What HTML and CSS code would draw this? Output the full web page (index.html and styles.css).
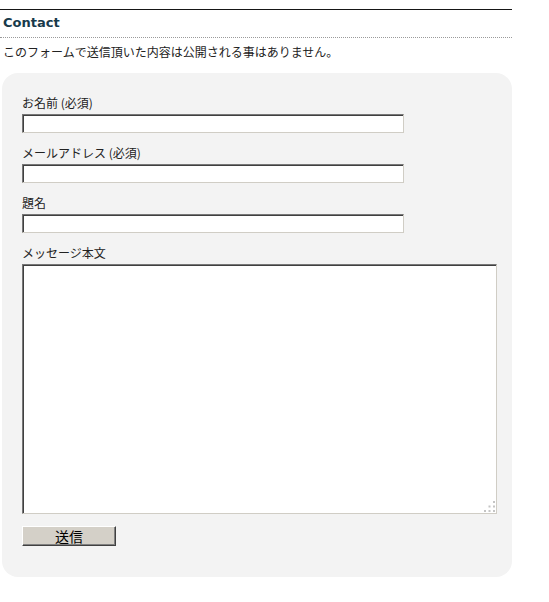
FILE: index.html
```html
<!DOCTYPE html>
<html lang="ja">
<head>
<meta charset="utf-8">
<title>Contact</title>
<link rel="stylesheet" href="styles.css">
</head>
<body>
<div class="page">
  <h2 class="title">Contact</h2>
  <p class="note">このフォームで送信頂いた内容は公開される事はありません。</p>
  <form class="box">
    <div class="field">
      <label class="label" for="n">お名前 (必須)</label>
      <input class="text" id="n" type="text">
    </div>
    <div class="field">
      <label class="label" for="m">メールアドレス (必須)</label>
      <input class="text" id="m" type="text">
    </div>
    <div class="field">
      <label class="label" for="s">題名</label>
      <input class="text" id="s" type="text">
    </div>
    <div class="field">
      <label class="label" for="b">メッセージ本文</label>
      <textarea class="area" id="b"></textarea>
    </div>
    <div class="actions">
      <button class="submit" type="button">送信</button>
    </div>
  </form>
</div>
</body>
</html>
```
FILE: styles.css
```css
html, body {
  margin: 0;
  padding: 0;
  background: #ffffff;
}
body {
  font-family: "Noto Sans CJK JP", "DejaVu Sans", sans-serif;
  font-size: 12px;
  color: #222;
}
.page {
  width: 512px;
  padding-top: 9px;
}
.title {
  margin: 0;
  border-top: 1px solid #161616;
  border-bottom: 1px dotted #9a9a9a;
  padding: 4px 0 0 3px;
  height: 23px;
  box-sizing: content-box;
  font-family: "DejaVu Sans", Verdana, sans-serif;
  font-size: 13px;
  font-weight: bold;
  line-height: 17px;
  color: #183a4b;
}
.note {
  margin: 0;
  padding: 5px 0 0 3px;
  height: 30px;
  line-height: 17px;
  color: #222;
}
.box {
  margin: 0 0 0 2px;
  width: 510px;
  box-sizing: border-box;
  background: #f3f3f3;
  border-radius: 16px;
  padding: 21px 15px 31px 20px;
  display: flex;
  flex-direction: column;
  gap: 11px;
}
.field {
  display: flex;
  flex-direction: column;
  gap: 3px;
  align-items: flex-start;
}
.label {
  display: block;
  height: 17px;
  line-height: 17px;
  color: #222;
}
.text, .area {
  margin: 0;
  padding: 0 2px;
  box-sizing: border-box;
  background-color: #fff;
  border: 1px solid;
  border-color: #777 #d0cdc5 #d0cdc5 #777;
  box-shadow: inset 1px 1px 0 #404040;
  font-family: "Noto Sans CJK JP", sans-serif;
  font-size: 12px;
  outline: none;
}
.text {
  width: 382px;
  height: 19px;
}
.area {
  width: 475px;
  height: 250px;
  resize: none;
  background-image: url("data:image/svg+xml,%3Csvg xmlns='http://www.w3.org/2000/svg' width='12' height='12'%3E%3Cg fill='%23c4c4c4'%3E%3Crect x='9' y='0' width='2' height='2'/%3E%3Crect x='4.5' y='4.5' width='2' height='2'/%3E%3Crect x='9' y='4.5' width='2' height='2'/%3E%3Crect x='0' y='9' width='2' height='2'/%3E%3Crect x='4.5' y='9' width='2' height='2'/%3E%3Crect x='9' y='9' width='2' height='2'/%3E%3C/g%3E%3C/svg%3E");
  background-repeat: no-repeat;
  background-position: right 0 bottom 0;
}
.actions {
  display: flex;
  padding-top: 1px;
}
.submit {
  margin: 0;
  width: 94px;
  height: 20px;
  padding: 0;
  background: #d4d0c8;
  border: 1px solid;
  border-color: #fff #404040 #404040 #fff;
  box-shadow: inset -1px -1px 0 #808080;
  font-family: "Noto Sans CJK JP", sans-serif;
  font-size: 14px;
  line-height: 17px;
  color: #000;
}
```
